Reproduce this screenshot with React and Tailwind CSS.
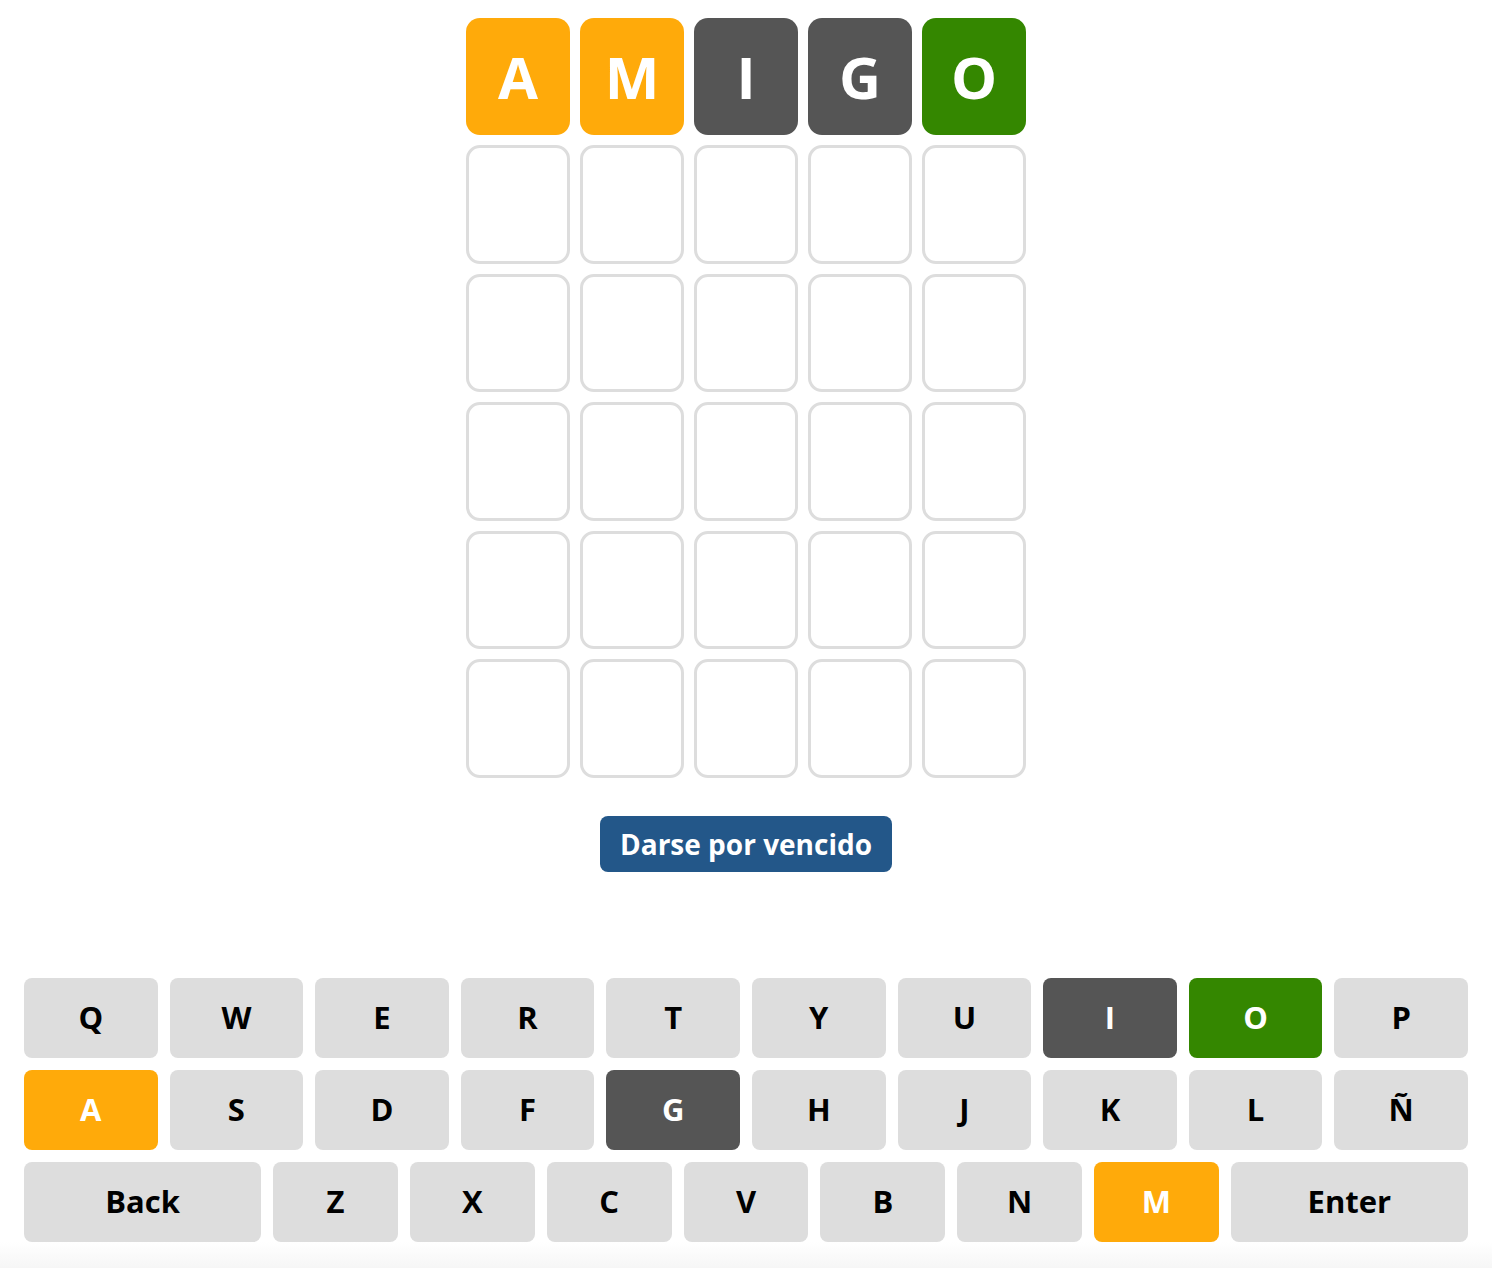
const guess = [
  { l: 'A', c: 'bg-[#ffaa0a]' },
  { l: 'M', c: 'bg-[#ffaa0a]' },
  { l: 'I', c: 'bg-[#555555]' },
  { l: 'G', c: 'bg-[#555555]' },
  { l: 'O', c: 'bg-[#348700]' },
]

const keyColors = {
  A: 'bg-[#ffaa0a] text-white',
  M: 'bg-[#ffaa0a] text-white',
  I: 'bg-[#555555] text-white',
  G: 'bg-[#555555] text-white',
  O: 'bg-[#348700] text-white',
}

const rows = [
  ['Q', 'W', 'E', 'R', 'T', 'Y', 'U', 'I', 'O', 'P'],
  ['A', 'S', 'D', 'F', 'G', 'H', 'J', 'K', 'L', 'Ñ'],
  ['Back', 'Z', 'X', 'C', 'V', 'B', 'N', 'M', 'Enter'],
]

function Key({ label }) {
  const wide = label === 'Back' || label === 'Enter'
  const color = keyColors[label] || 'bg-[#dddddd] text-black'
  return (
    <button
      className={`${wide ? 'flex-[1.9]' : 'flex-1'} ${color} h-[80px] rounded-lg flex items-center justify-center text-[31px] font-bold`}
    >
      {label}
    </button>
  )
}

export default function App() {
  return (
    <div className="w-[1492px] bg-white flex flex-col items-center pt-[18px] font-['Open_Sans',sans-serif]">
      <div className="grid grid-cols-5 gap-[10px] w-[560px]">
        {guess.map((g, i) => (
          <div
            key={i}
            className={`${g.c} h-[117px] rounded-[14px] flex items-center justify-center text-white text-[58px] font-bold leading-none`}
          >
            {g.l}
          </div>
        ))}
        {Array.from({ length: 25 }).map((_, i) => (
          <div key={i} className="h-[118.5px] rounded-[14px] border-[3px] border-[#dddddd] bg-white" />
        ))}
      </div>

      <button className="mt-[38px] h-[56px] px-5 rounded-lg bg-[#235789] text-white text-[28px] font-bold">
        Darse por vencido
      </button>

      <div className="mt-[106px] w-full px-6 flex flex-col gap-3">
        {rows.map((row, i) => (
          <div key={i} className="flex gap-3">
            {row.map((k) => (
              <Key key={k} label={k} />
            ))}
          </div>
        ))}
      </div>

      <div className="w-full h-[26px] bg-gradient-to-b from-white to-[#f6f6f6]" />
    </div>
  )
}
